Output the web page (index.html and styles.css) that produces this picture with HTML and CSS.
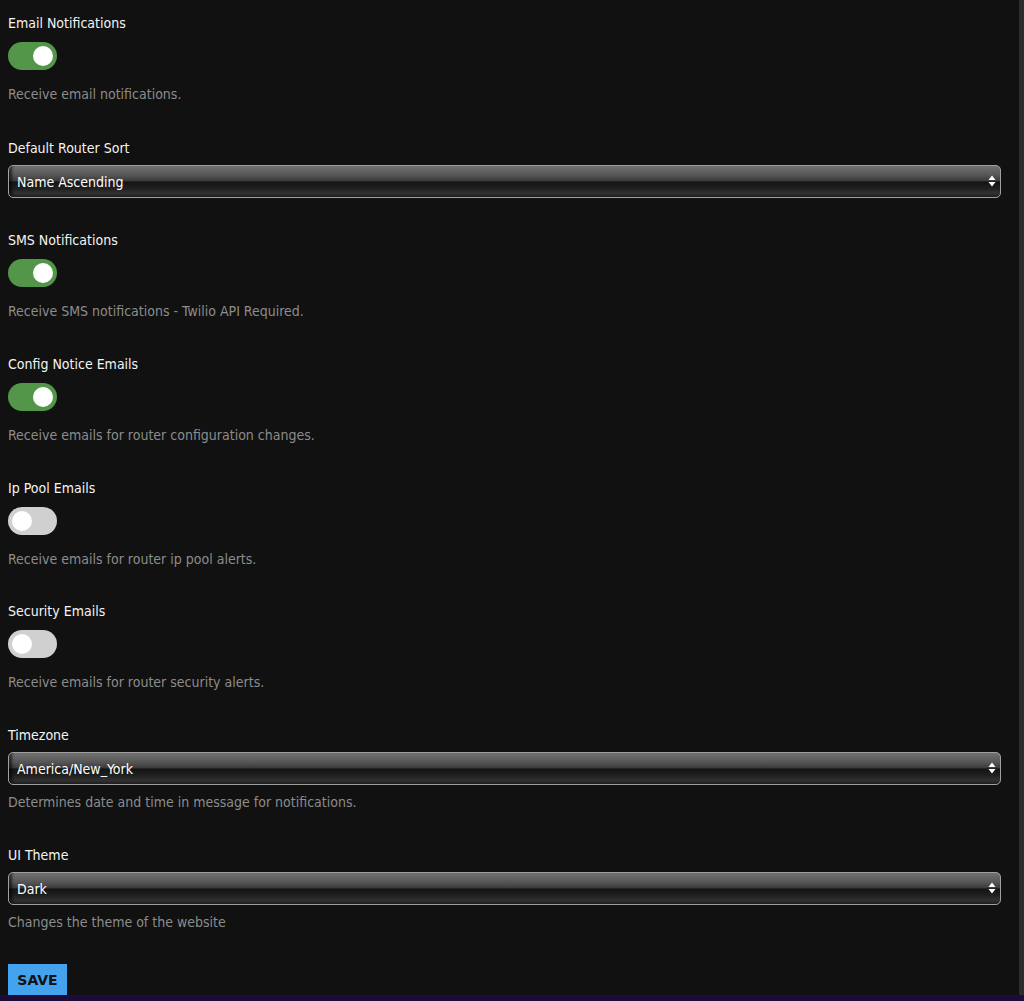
FILE: index.html
```html
<!DOCTYPE html>
<html>
<head>
<meta charset="utf-8">
<link rel="stylesheet" href="styles.css">
</head>
<body>
<div class="page">
  <main class="settings">
    <div class="group group-first">
      <div class="label">Email Notifications</div>
      <div class="toggle on"><span class="knob"></span></div>
      <div class="desc">Receive email notifications.</div>
    </div>
    <div class="group group-select">
      <div class="label">Default Router Sort</div>
      <div class="select-wrap">
        <select class="select"><option>Name Ascending</option></select>
        <svg class="arrows" width="8" height="12" viewBox="0 0 8 12"><path d="M4 0.5 L7.5 5 L0.5 5 Z M4 11.5 L7.5 7 L0.5 7 Z" fill="#fff"/></svg>
      </div>
    </div>
    <div class="group">
      <div class="label">SMS Notifications</div>
      <div class="toggle on"><span class="knob"></span></div>
      <div class="desc">Receive SMS notifications - Twilio API Required.</div>
    </div>
    <div class="group">
      <div class="label">Config Notice Emails</div>
      <div class="toggle on"><span class="knob"></span></div>
      <div class="desc">Receive emails for router configuration changes.</div>
    </div>
    <div class="group group-short">
      <div class="label">Ip Pool Emails</div>
      <div class="toggle"><span class="knob"></span></div>
      <div class="desc">Receive emails for router ip pool alerts.</div>
    </div>
    <div class="group">
      <div class="label">Security Emails</div>
      <div class="toggle"><span class="knob"></span></div>
      <div class="desc">Receive emails for router security alerts.</div>
    </div>
    <div class="group">
      <div class="label">Timezone</div>
      <div class="select-wrap">
        <select class="select"><option>America/New_York</option></select>
        <svg class="arrows" width="8" height="12" viewBox="0 0 8 12"><path d="M4 0.5 L7.5 5 L0.5 5 Z M4 11.5 L7.5 7 L0.5 7 Z" fill="#fff"/></svg>
      </div>
      <div class="desc desc-tight">Determines date and time in message for notifications.</div>
    </div>
    <div class="group group-short">
      <div class="label">UI Theme</div>
      <div class="select-wrap">
        <select class="select"><option>Dark</option></select>
        <svg class="arrows" width="8" height="12" viewBox="0 0 8 12"><path d="M4 0.5 L7.5 5 L0.5 5 Z M4 11.5 L7.5 7 L0.5 7 Z" fill="#fff"/></svg>
      </div>
      <div class="desc desc-tight">Changes the theme of the website</div>
    </div>
    <button class="save">SAVE</button>
  </main>
  <div class="rail"></div>
</div>
<footer class="footer"></footer>
</body>
</html>
```
FILE: styles.css
```css
html, body {
  margin: 0;
  padding: 0;
  background: #111111;
}
body {
  font-family: "DejaVu Sans Condensed", "DejaVu Sans", sans-serif;
  font-size: 14px;
  color: #f2f2f2;
  overflow: hidden;
}
.page {
  display: flex;
  height: 995px;
}
.settings {
  width: 993px;
  padding: 13px 18px 0 8px;
  display: flex;
  flex-direction: column;
  align-items: flex-start;
}
.rail {
  width: 5px;
  background: #2c2c2c;
}
.footer {
  height: 6px;
  background: #1d0b3a;
}
.group {
  width: 100%;
  margin-bottom: 33px;
  display: flex;
  flex-direction: column;
  align-items: flex-start;
}
.group-first {
  margin-bottom: 34px;
}
.group-select {
  margin-bottom: 32px;
}
.group-short {
  margin-bottom: 32px;
}
.label {
  line-height: 20px;
  color: #f4f4f4;
}
.toggle {
  margin-top: 9px;
  width: 49px;
  height: 28px;
  border-radius: 14px;
  background: #d0d0d0;
  display: flex;
  align-items: center;
  padding: 0 4px;
  box-sizing: border-box;
}
.toggle.on {
  background: #53964a;
  justify-content: flex-end;
}
.knob {
  width: 20px;
  height: 20px;
  border-radius: 50%;
  background: #ffffff;
}
.desc {
  margin-top: 14px;
  line-height: 20px;
  color: #8c8c8c;
}
.desc-tight {
  margin-top: 7px;
}
.select-wrap {
  position: relative;
  width: 100%;
  margin-top: 7px;
}
.select {
  appearance: none;
  -webkit-appearance: none;
  display: block;
  width: 100%;
  height: 33px;
  margin: 0;
  padding: 0 24px 0 8px;
  border: 1px solid #a0a0a0;
  border-radius: 5px;
  font-family: inherit;
  font-size: 14px;
  color: #ffffff;
  background: linear-gradient(to bottom, #727272 0%, #555555 30%, #3c3c3c 47%, #141414 52%, #222222 75%, #444444 100%);
  box-shadow: inset 3px -2px 3px rgba(0,0,0,0.6);
  outline: none;
}
.arrows {
  position: absolute;
  right: 5px;
  top: 10px;
}
.save {
  margin-top: 0;
  width: 59px;
  height: 31px;
  border: none;
  background: #43a3ee;
  color: #111111;
  font-family: "DejaVu Sans", sans-serif;
  font-weight: bold;
  font-size: 14px;
  padding: 0;
}
```
